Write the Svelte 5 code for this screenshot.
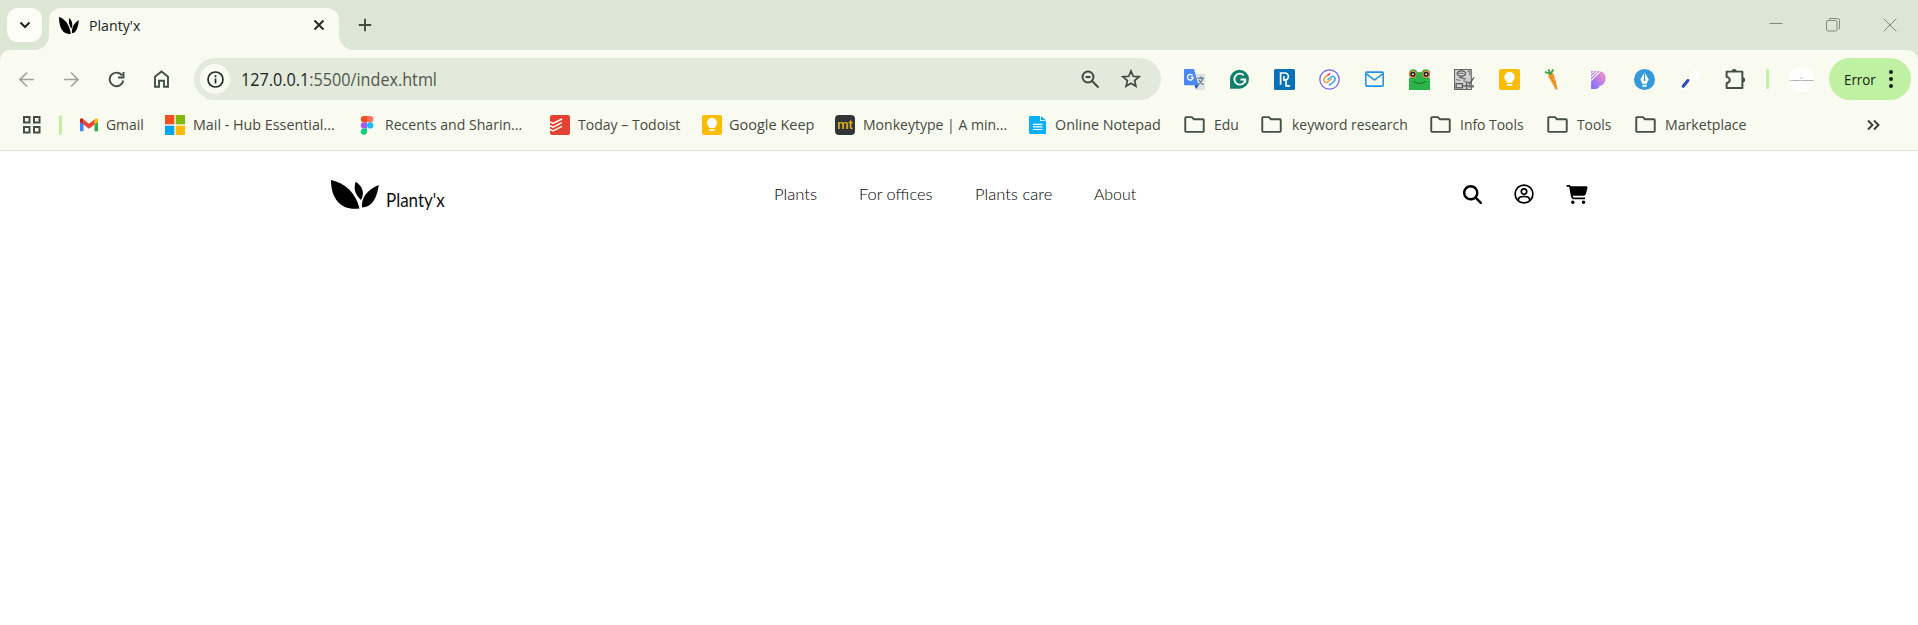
<script>
  // Scales a label horizontally so that it fills its slot exactly.
  function fit(node, width) {
    const natural = node.offsetWidth;
    if (natural) node.style.transform = `scaleX(${width / natural})`;
  }

  const bookmarks = [
    { icon: 'gmail', label: 'Gmail', gap: 7, w: 38, after: 21 },
    { icon: 'microsoft', label: 'Mail - Hub Essential...', gap: 8, w: 142, after: 22 },
    { icon: 'figma', label: 'Recents and Sharin...', gap: 8, w: 137, after: 28 },
    { icon: 'todoist', label: 'Today – Todoist', gap: 8, w: 102, after: 22 },
    { icon: 'keep', label: 'Google Keep', gap: 7, w: 85, after: 21 },
    { icon: 'monkey', label: 'Monkeytype | A min...', gap: 8, w: 144, after: 21 },
    { icon: 'notepad', label: 'Online Notepad', gap: 7, w: 106, after: 23 },
    { icon: 'folder', label: 'Edu', gap: 9, w: 25, after: 22 },
    { icon: 'folder', label: 'keyword research', gap: 10, w: 116, after: 22 },
    { icon: 'folder', label: 'Info Tools', gap: 9, w: 64, after: 23 },
    { icon: 'folder', label: 'Tools', gap: 9, w: 34, after: 24 },
    { icon: 'folder', label: 'Marketplace', gap: 9, w: 82, after: 0 }
  ];

  const extensions = ['translate', 'grammarly', 'pl', 'swirl', 'mail', 'frog', 'engraving', 'keep', 'carrot', 'pp', 'pen', 'picker', 'puzzle'];

  const links = [
    { label: 'Plants', w: 43 },
    { label: 'For offices', w: 74 },
    { label: 'Plants care', w: 77 },
    { label: 'About', w: 42 }
  ];
</script>

{#snippet label(text, width)}
  <span class="slot" style="width: {width}px"><span class="fit" use:fit={width}>{text}</span></span>
{/snippet}

{#snippet leaves(w, h)}
  <svg width={w} height={h} viewBox="0 0 48 29" preserveAspectRatio="none" fill="#000">
    <path d="M0 0C14 3 25 13 28.500 28.500C11 31 0 20 0 0Z" />
    <path d="M24.700 1.700C31.500 6 34 13 30 20C23.500 14 22.500 8 24.700 1.700Z" />
    <path d="M47.700 5C36 10 30 18 31 27.500C41 27.500 46 18 47.700 5Z" />
  </svg>
{/snippet}

{#snippet icon(name, size)}
  <svg width={size} height={size} viewBox="0 0 20 20" fill="none">
    {#if name === 'gmail'}
      <path d="M1 5V16.300h3.500V8.500Z" fill="#4285f4" />
      <path d="M19 5V16.300h-3.500V8.500Z" fill="#34a853" />
      <path d="M15.500 4.500v5L19 7V5c0-2-2-2.500-3.500-.500Z" fill="#fbbc04" />
      <path d="M1 5v2l3.500 2.500v-5C3 2.500 1 3 1 5Z" fill="#c5221f" />
      <path d="M4.500 4.500 10 8.700l5.500-4.200v5L10 13.700 4.500 9.500Z" fill="#ea4335" />
    {:else if name === 'microsoft'}
      <path d="M0 0h9.300v9.300H0Z" fill="#f25022" /><path d="M10.700 0H20v9.300h-9.300Z" fill="#7fba00" />
      <path d="M0 10.700h9.300V20H0Z" fill="#00a4ef" /><path d="M10.700 10.700H20V20h-9.300Z" fill="#ffb900" />
    {:else if name === 'figma'}
      <path d="M10 1H7a3 3 0 0 0 0 6.300h3Z" fill="#f24e1e" />
      <path d="M10 1h3.200a3.100 3.100 0 0 1 0 6.300H10Z" fill="#ff7262" />
      <path d="M10 7.300H7a3 3 0 0 0 0 6.300h3Z" fill="#a259ff" />
      <circle cx="13.200" cy="10.400" r="3.100" fill="#1abcfe" />
      <path d="M10 13.600H7a3.100 3.100 0 1 0 3 3.200Z" fill="#0acf83" />
    {:else if name === 'todoist'}
      <rect width="20" height="20" rx="2" fill="#e44332" />
      <path d="m0 7 3 1.500L12 4M0 10.700l3 1.500 9-4.500M0 14.400l3 1.500 9-4.500" stroke="#fff" stroke-width="1.500" />
    {:else if name === 'keep'}
      <rect width="20" height="20" rx="2" fill="#fbbc04" />
      <path d="M7.300 13v-1.100a5 5 0 1 1 5.400 0V13Z" fill="#fff" /><path d="M7.500 14.200h5v1.800h-5Z" fill="#fff" />
    {:else if name === 'notepad'}
      <path d="M1.500 1H12v5h6v13H2.500a1.500 1.500 0 0 1-1.500-1.500v-15Z" fill="#08aeff" />
      <path d="M13 1l5 4.200h-5Z" fill="#08aeff" />
      <path d="M5 9.300h9.500M5 11.900h9.500M5 14.500h9.500" stroke="#fff" stroke-width="1.200" />
    {:else if name === 'folder'}
      <path d="M1.200 3.700q0-.7.700-.7h5.600l2 2h8.600q.7 0 .7.700v10.600q0 .7-.7.700H1.900q-.7 0-.7-.7Z" stroke="#454f42" stroke-width="1.800" stroke-linejoin="round" />
    {:else if name === 'translate'}
      <path d="M7 4.500h12a1 1 0 0 1 1 1V19a1 1 0 0 1-1 1h-7.500Z" fill="#dfe1e2" />
      <path d="M1 0h8.500l4.300 15.500H1a1 1 0 0 1-1-1V1a1 1 0 0 1 1-1Z" fill="#4988f3" />
      <path d="M10 15.500h4L11.500 19Z" fill="#1e46ae" />
      <path d="M8.200 6.200A2.700 2.700 0 1 0 8.700 8H6.300" stroke="#fff" stroke-width="1.300" />
      <path d="M13 8.700h6M16 7v1.500M17.800 9c-.5 2.500-2.300 4.500-4.500 6M14 10.300c.8 2 2.500 3.400 4.500 4.700" stroke="#607988" stroke-width="1" />
    {:else if name === 'grammarly'}
      <path d="M1 18.700V9.800A9 9 0 1 1 10 18.700Z" fill="#11806a" />
      <path d="M14 6a5.200 5.200 0 1 0 1.200 5.500M11 10h4.500v3" stroke="#fff" stroke-width="1.700" />
    {:else if name === 'pl'}
      <rect width="20" height="20" rx="1.500" fill="#0872b9" />
      <path d="M6.300 15V3.800h4a3.400 3.400 0 0 1 0 6.800H9.500V7M11.500 10v6h3.800" stroke="#fff" stroke-width="1.600" />
    {:else if name === 'swirl'}
      <circle cx="10" cy="10" r="9.200" fill="#fff" stroke="#6e63ed" stroke-width="1.200" />
      <path d="M8.500 5.800 5.800 8c-2.600 2.300-.5 6.300 2.500 4.400l3.200-2.600" stroke="#f59a37" stroke-width="1.400" stroke-linecap="round" />
      <path d="m8.500 5.800 1.800-1.300" stroke="#ec3f75" stroke-width="1.500" stroke-linecap="round" />
      <path d="m9.800 15.300 4.300-3.300c2.800-2.400.6-6.400-2.400-4.500L8.500 10" stroke="#2eafd3" stroke-width="1.400" stroke-linecap="round" />
    {:else if name === 'mail'}
      <rect x="1.700" y="3" width="16.600" height="13.300" rx="1" stroke="#2492ed" stroke-width="1.500" />
      <path d="m2 4.500 8 6 8-6" stroke="#2492ed" stroke-width="1.500" />
    {:else if name === 'frog'}
      <path d="M0 9q0-1 1-1h18q1 0 1 1v11H0Z" fill="#2cb44a" />
      <path d="M2 3h16v8H2Z" fill="#2cb44a" />
      <circle cx="4" cy="4.500" r="4.300" fill="#2cb44a" /><circle cx="16" cy="4.500" r="4.300" fill="#2cb44a" />
      <circle cx="3.700" cy="5" r="3" fill="#201c1a" stroke="#f08440" stroke-width="1.200" />
      <circle cx="16.300" cy="5" r="3" fill="#201c1a" stroke="#f08440" stroke-width="1.200" />
      <circle cx="3.700" cy="5" r=".9" fill="#fff" /><circle cx="16.300" cy="5" r=".9" fill="#fff" />
      <path d="M4.500 11.800c3.500 2.500 8 2.500 11 0" stroke="#18652b" stroke-width="1" />
    {:else if name === 'engraving'}
      <path d="M.5.500h16v19H.5Z" fill="#d0d0ce" stroke="#66666a" />
      <path d="M3 5c0-4 8-4 8-1s-6 4-8 1ZM5 8c3-1 4 3 6 1M2 14h6v4H2ZM8 16h11M13 12l2 2 4-6M12 12v7" stroke="#58585c" stroke-width="1.200" />
      <path d="M13 2h2v4M2 10l4 1M4 4h5M9 11l3 2M14 17h5" stroke="#707074" />
    {:else if name === 'carrot'}
      <path d="M3.800 6.500C4.500 3.500 8.500 3 9.500 5.500L13 19c-.5 1.300-1.500 1-2 .2Z" fill="#f39a2d" />
      <path d="m6 9 2-.8M9.500 13l1.500-.5M7.500 11l1-.3M11 16l1-.3" stroke="#c7671b" stroke-width=".8" />
      <path d="M6 4.500 1.500 3M6 4.500 4.500 1M6.500 4.500 8.500 1" stroke="#42a145" stroke-width="1.700" stroke-linecap="round" />
    {:else if name === 'pp'}
      <defs><linearGradient id="violet" x1="0" y1="1" x2="1" y2="0"><stop stop-color="#776dff" /><stop offset="1" stop-color="#ff94c5" /></linearGradient></defs>
      <path d="M2 2h9a7.500 7.500 0 0 1 0 14h-1c0 2-2 3-4 3H2Z" fill="url(#violet)" />
      <path d="M2 5 5 2M2 8l6-6M2 11l9-9" stroke="#fafaf3" stroke-width="1" />
    {:else if name === 'pen'}
      <circle cx="10" cy="10" r="10" fill="#3498db" />
      <path d="M10 3 6 10l2 4h4l2-4Z" fill="#fff" /><path d="M8 15h4v2H8Z" fill="#fff" />
      <path d="M10 4v6.500" stroke="#3498db" /><circle cx="10" cy="10.500" r="1" fill="#3498db" />
    {:else if name === 'picker'}
      <path d="M3.500 17.500 12 8" stroke="#fff" stroke-width="4.600" stroke-linecap="round" />
      <path d="m10.500 5 7 6M12 8l4-6 3 3-5 4Z" stroke="#fff" stroke-width="2.500" fill="#fff" />
      <path d="m4 16.500 4.500-5.500" stroke="#3349b9" stroke-width="3" stroke-linecap="round" />
    {:else if name === 'puzzle'}
      <path d="M2.500 2.500H17.500V18.200H2.500v-4.700c4-1 4-5 0-6Z" stroke="#43503f" stroke-width="1.900" stroke-linejoin="round" />
      <path d="M7.300 2.300c0-3 4.800-3 4.800 0ZM18 8c3 0 3 4.600 0 4.600Z" fill="#43503f" />
    {/if}
  </svg>
{/snippet}

<div class="browser">
  <div class="tabs">
    <button class="search-tabs" aria-label="Search tabs">
      <svg width="12" height="8" viewBox="0 0 12 8" fill="none"><path d="m1.500 1.500 4.500 4.500 4.500-4.500" stroke="#202820" stroke-width="2" /></svg>
    </button>
    <div class="tab">
      {@render leaves(20, 17)}
      <div class="title">{@render label("Planty'x", 51)}</div>
      <svg class="close" width="12" height="12" viewBox="0 0 12 12"><path d="m1.500 1.500 9 9m0-9-9 9" stroke="#202820" stroke-width="1.900" /></svg>
    </div>
    <svg class="plus" width="14" height="14" viewBox="0 0 14 14"><path d="M7 .8v12.400M.8 7h12.400" stroke="#424b3f" stroke-width="1.900" /></svg>
    <div class="window">
      <svg width="14" height="14" viewBox="0 0 14 14"><path d="M.5 5.500h13" stroke="#80887c" /></svg>
      <svg width="14" height="14" viewBox="0 0 14 14" fill="none" stroke="#80887c"><rect x=".5" y="2.500" width="10.500" height="10.500" rx="1.500" /><path d="M3 1.500Q3 .5 4 .5h7.500q2 0 2 2V10q0 1-1 1" /></svg>
      <svg width="14" height="14" viewBox="0 0 14 14"><path d="m.7.700 12.600 12.600m0-12.600L.7 13.300" stroke="#80887c" /></svg>
    </div>
  </div>

  <div class="toolbar">
    <div class="nav">
      <svg width="17" height="17" viewBox="0 0 17 17" fill="none" stroke="#a0a59b" stroke-width="1.700"><path d="M16 8.500H2M9 1.500l-7 7 7 7" /></svg>
      <svg width="17" height="17" viewBox="0 0 17 17" fill="none" stroke="#a0a59b" stroke-width="1.700"><path d="M1 8.500h14M8 1.500l7 7-7 7" /></svg>
      <svg width="17" height="17" viewBox="0 0 17 17" fill="none" stroke="#43503f" stroke-width="1.900"><path d="M14 4.500A6.800 6.800 0 1 0 15.200 9.500M15.500 1v5.500H10" /></svg>
      <svg width="17" height="18" viewBox="0 0 17 18" fill="none" stroke="#43503f" stroke-width="1.900"><path d="M2 16.800V6.700L8.500 1.500 15 6.700v10.100h-4v-6H6v6Z" /></svg>
    </div>
    <div class="address">
      <span class="info">
        <svg width="17" height="17" viewBox="0 0 17 17" fill="none"><circle cx="8.500" cy="8.500" r="7.500" stroke="#262d24" stroke-width="1.700" /><path d="M8.500 7.500v5M8.500 4.300v1.900" stroke="#262d24" stroke-width="1.700" /></svg>
      </span>
      <div class="url"><span class="slot" style="width: 196px"><span class="fit" use:fit={196}>127.0.0.1<span class="path">:5500/index.html</span></span></span></div>
      <svg class="zoom" width="19" height="19" viewBox="0 0 19 19" fill="none" stroke="#43483f" stroke-width="1.900"><circle cx="7" cy="7" r="5.500" /><path d="m11 11 6.500 6.500M4.500 7h5" /></svg>
      <svg class="star" width="20" height="20" viewBox="0 0 20 20" fill="none" stroke="#43483f" stroke-width="1.700"><path d="m10 2 2.200 5.300 5.800.500-4.400 3.800 1.300 5.700-4.900-3-4.900 3 1.300-5.700L2 7.800l5.800-.500Z" /></svg>
    </div>
    <div class="extensions">
      {#each extensions as name}{@render icon(name, 21)}{/each}
    </div>
    <i class="divider"></i>
    <div class="avatar"><b>▱</b><span>Munawar Designhour</span></div>
    <div class="error">
      {@render label('Error', 32)}
      <svg width="6" height="18" viewBox="0 0 6 18" fill="#10210e"><circle cx="3" cy="2" r="2" /><circle cx="3" cy="9" r="2" /><circle cx="3" cy="16" r="2" /></svg>
    </div>
  </div>

  <div class="bookmarks">
    <svg width="20" height="20" viewBox="0 0 20 20" fill="none" stroke="#454f42" stroke-width="2"><path d="M2 2h5.500v5.500H2ZM12 2h5.500v5.500H12ZM2 12h5.500v5.500H2ZM12 12h5.500v5.500H12Z" /></svg>
    <i class="divider"></i>
    {#each bookmarks as b}
      <div class="bookmark" style="margin-right: {b.after}px; gap: {b.gap}px">
        {#if b.icon === 'monkey'}
          <span class="monkey">mt</span>
        {:else}
          {@render icon(b.icon, b.icon === 'folder' ? 21 : 20)}
        {/if}
        <div class="name">{@render label(b.label, b.w)}</div>
      </div>
    {/each}
    <svg class="more" width="13" height="12" viewBox="0 0 13 12" fill="none" stroke="#383e35" stroke-width="1.900"><path d="m1 1.500 4.500 4.500L1 10.500M7 1.500 11.500 6 7 10.500" /></svg>
  </div>
</div>

<header>
  <div class="brand">
    {@render leaves(48, 29)}
    <div class="wordmark">{@render label("Planty'x", 59)}</div>
  </div>
  <nav>
    {#each links as l}{@render label(l.label, l.w)}{/each}
  </nav>
  <div class="actions">
    <svg width="19" height="19" viewBox="0 0 512 512"><path d="M416 208c0 45.900-14.900 88.300-40 122.700L502.600 457.400c12.500 12.500 12.500 32.800 0 45.300s-32.800 12.500-45.300 0L330.700 376c-34.400 25.200-76.800 40-122.700 40C93.100 416 0 322.900 0 208S93.100 0 208 0S416 93.100 416 208zM208 352a144 144 0 1 0 0-288 144 144 0 1 0 0 288z" /></svg>
    <svg width="20" height="20" viewBox="0 0 20 20" fill="none" stroke="#000" stroke-width="1.700"><circle cx="10" cy="10" r="8.900" /><circle cx="10" cy="7.600" r="2.700" /><path d="M4.200 16.300c.5-4 3-3.800 5.800-3.800s5.300-.2 5.800 3.800" /></svg>
    <svg width="22" height="19" viewBox="0 0 576 512"><path d="M0 24C0 10.700 10.700 0 24 0H69.500c22 0 41.500 12.800 50.600 32h411c26.300 0 45.500 25 38.600 50.400l-41 152.300c-8.500 31.400-37 53.300-69.500 53.300H170.700l5.400 28.500c2.200 11.300 12.100 19.500 23.600 19.500H488c13.300 0 24 10.700 24 24s-10.700 24-24 24H199.700c-34.600 0-64.300-24.600-70.700-58.500L77.400 54.500c-.7-3.800-4-6.500-7.900-6.500H24C10.700 48 0 37.300 0 24zM128 464a48 48 0 1 1 96 0 48 48 0 1 1-96 0zm336-48a48 48 0 1 1 0 96 48 48 0 1 1 0-96z" /></svg>
  </div>
</header>

<style>
  :global(body) { background: #fff; overflow: hidden; }
  svg { display: block; flex: none; }
  .slot { display: inline-block; flex: none; white-space: nowrap; }
  .fit { display: inline-block; transform-origin: left center; }
  .browser { width: 1918px; background: #dde6d5; font: 15px/20px "Open Sans", "Noto Sans", sans-serif; color: #454b42; }
  .tabs { display: flex; height: 50px; box-sizing: border-box; padding: 8px 0 0 7px; background: #dde6d5; }
  .search-tabs { display: grid; place-items: center; width: 35px; height: 34px; padding: 0; border: 0; border-radius: 11px; background: #fcfdf5; }
  .tab { position: relative; display: flex; align-items: center; box-sizing: border-box; width: 290px; height: 42px; margin-left: 7px; padding: 0 14px 8px 10px; border-radius: 12px 12px 0 0; background: #f9faf0; color: #20251f; }
  .tab::before, .tab::after { content: ""; position: absolute; bottom: 0; width: 14px; height: 14px; }
  .tab::before { left: -14px; background: radial-gradient(circle at 0 0, transparent 13.500px, #f9faf0 14px); }
  .tab::after { right: -14px; background: radial-gradient(circle at 100% 0, transparent 13.500px, #f9faf0 14px); }
  .title { margin-left: 10px; }
  .close { margin-left: auto; }
  .plus { margin: 10px 0 0 19px; }
  .window { display: flex; gap: 43px; margin: 10px 21px 0 auto; }
  .toolbar { display: flex; align-items: center; height: 58px; padding-left: 18px; border-radius: 10px 10px 0 0; background: #f9faf0; }
  .nav { display: flex; align-items: center; gap: 28px; width: 176px; }
  .address { display: flex; align-items: center; box-sizing: border-box; width: 967px; height: 42px; padding: 0 20px 0 6px; border-radius: 21px; background: #e4eadb; }
  .info { display: grid; place-items: center; width: 30px; height: 30px; border-radius: 50%; background: #f9faf0; }
  .url { margin-left: 11px; font-size: 18px; line-height: 24px; color: #20251f; }
  .path { color: #50574d; }
  .zoom { margin-left: auto; }
  .star { margin-left: 21px; }
  .extensions { display: flex; gap: 24px; margin-left: 23px; }
  .divider { flex: none; width: 3px; height: 20px; border-radius: 2px; background: #c0f0a2; }
  .toolbar .divider { margin-left: 21px; }
  .avatar { display: flex; flex-direction: column; align-items: center; justify-content: center; width: 25px; height: 25px; margin-left: 20px; border-radius: 50%; background: #fff; overflow: hidden; font-size: 2.500px; line-height: 3px; color: #333; white-space: nowrap; }
  .avatar b { color: #ef8c7c; font-size: 4px; }
  .error { display: flex; align-items: center; box-sizing: border-box; width: 82px; height: 42px; margin-left: 15px; padding-left: 15px; gap: 12px; border-radius: 21px; background: #c0f0a2; color: #10210e; }
  .bookmarks { display: flex; align-items: center; box-sizing: border-box; height: 43px; padding: 0 38px 9px 22px; border-bottom: 1px solid #dfe2d8; background: #f9faf0; }
  .bookmarks .divider { margin: 0 17px; }
  .bookmark { display: flex; align-items: center; }
  .name { padding-bottom: 2px; }
  .monkey { width: 20px; height: 20px; border-radius: 4px; background: #323437; color: #e2b714; font: 500 13px/19px "Roboto", sans-serif; text-align: center; }
  .more { margin-left: auto; }
  header { display: flex; align-items: center; justify-content: space-between; box-sizing: border-box; width: 1257px; height: 86px; margin-left: 331px; }
  .brand { display: flex; align-items: center; width: 443px; padding-top: 1px; }
  .wordmark { margin: 10px 0 0 7px; color: #111; font: 19px/26px "Lato", sans-serif; }
  nav { display: flex; gap: 42px; width: 362px; color: #000; font: 300 15.500px/22px "Lato", sans-serif; }
  .actions { display: flex; align-items: center; justify-content: flex-end; gap: 32px; width: 452px; }
</style>
